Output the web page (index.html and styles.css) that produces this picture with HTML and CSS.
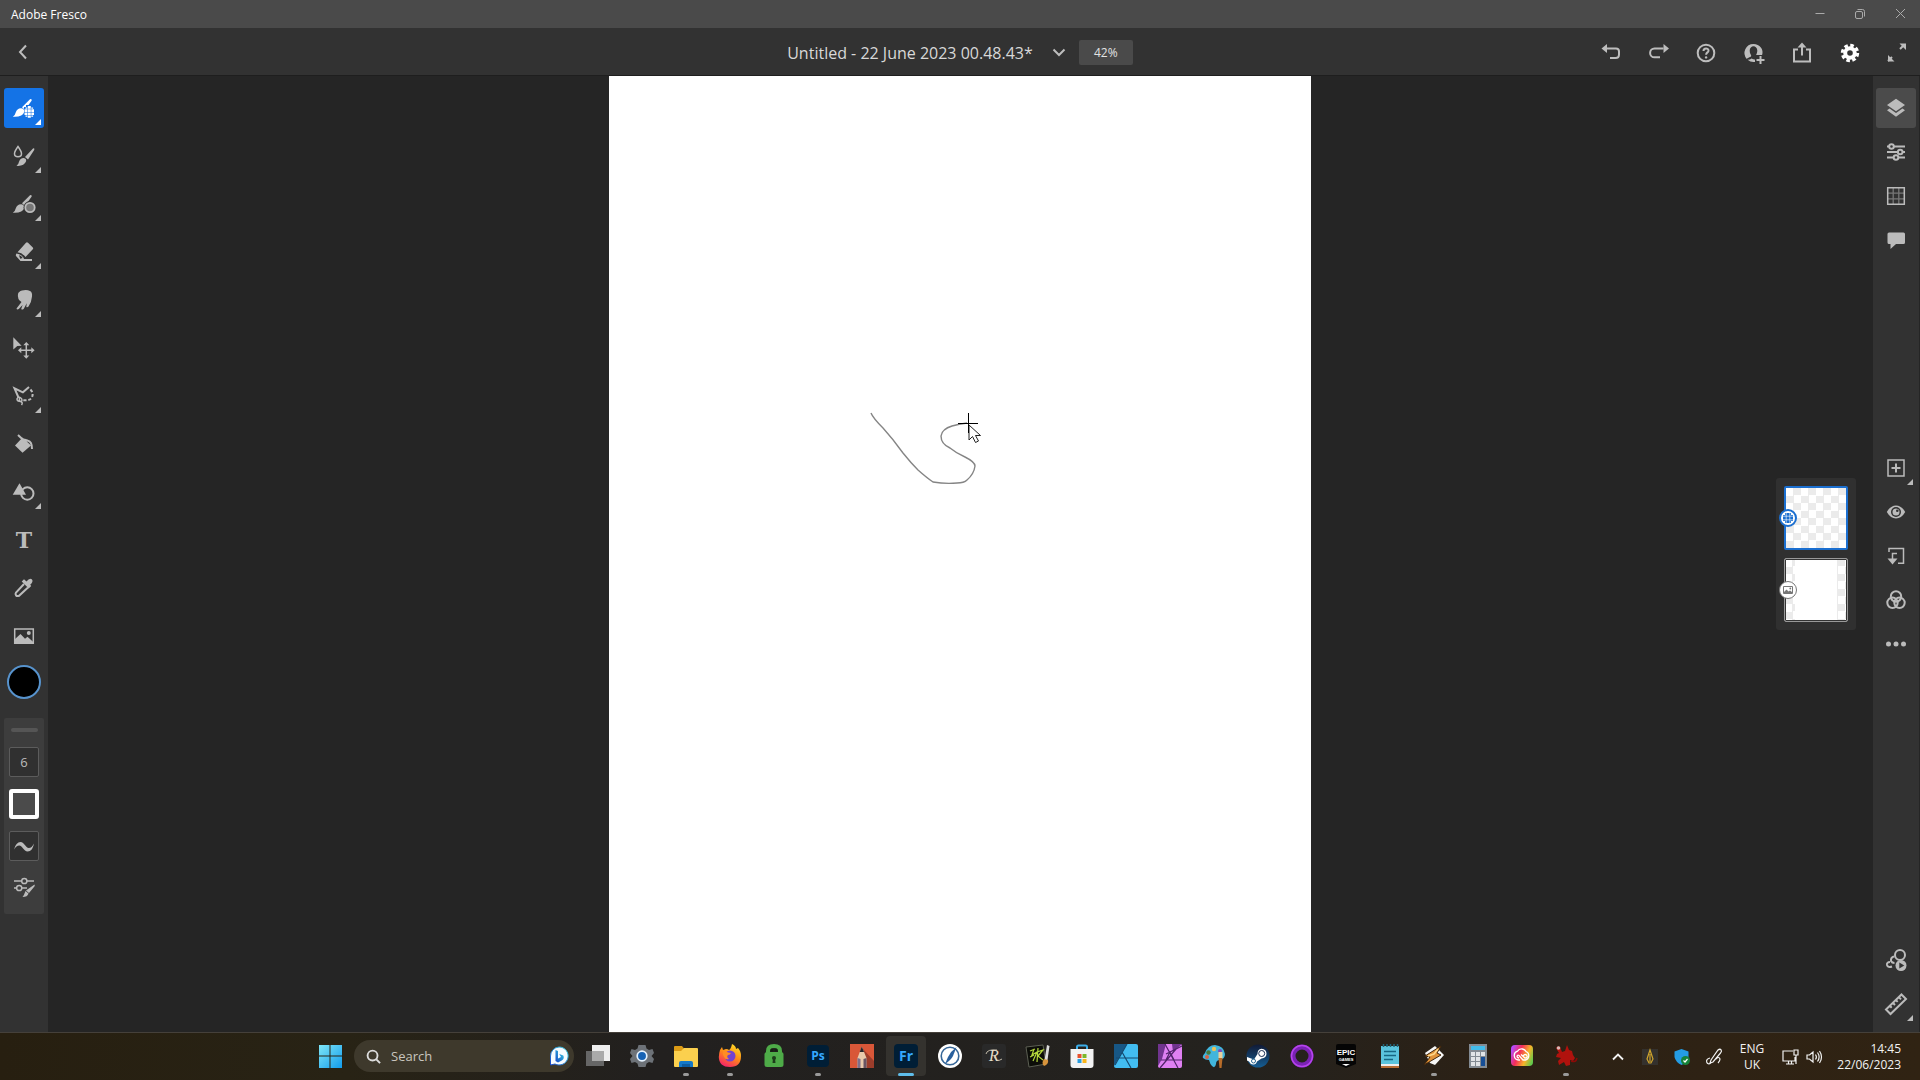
FILE: index.html
```html
<!DOCTYPE html>
<html lang="en">
<head>
  <meta charset="UTF-8">
  <meta name="viewport" content="width=device-width, initial-scale=1.0">
  <title>Adobe Fresco</title>
  <link rel="stylesheet" href="styles.css">
</head>
<body>
  <div class="titlebar">
    <span class="titlebar__name">Adobe Fresco</span>
    <div class="titlebar__controls">
      <button class="win-btn" aria-label="Minimize"><svg viewBox="0 0 12 12"><path d="M1.500 5.500h9"/></svg></button>
      <button class="win-btn" aria-label="Restore"><svg viewBox="0 0 12 12"><rect x="1.500" y="3.500" width="7" height="7" rx="1.500"/><path d="M3.500 1.500h5a2 2 0 0 1 2 2v5"/></svg></button>
      <button class="win-btn" aria-label="Close"><svg viewBox="0 0 12 12"><path d="M2 1l9 9M11 1l-9 9"/></svg></button>
    </div>
  </div>

  <header class="header">
    <div class="header__left">
      <button class="header__btn" aria-label="Back"><svg class="icon" viewBox="0 0 24 24"><path class="line" d="M14 4.500L8 11l6 6.500"/></svg></button>
    </div>
    <div class="header__doc">
      <h1 class="header__title">Untitled - 22 June 2023 00.48.43*</h1>
      <button class="header__chevron" aria-label="Document menu"><svg class="icon" viewBox="0 0 24 24"><path class="line" d="M6.500 8.500L12 14l5.500-5.500"/></svg></button>
      <button class="header__zoom">42%</button>
    </div>
    <div class="header__actions">
      <button class="header__btn" aria-label="Undo"><svg class="icon" viewBox="0 0 24 24"><path class="line" d="M10 7.500h10q3 0 3 3v3q0 3.500-3.500 3.500H14"/><path d="M5.500 7.500L11 3v9z"/></svg></button>
      <button class="header__btn" aria-label="Redo"><svg class="icon" viewBox="0 0 24 24"><path class="line" d="M19.500 7.500h-9a4.400 4.400 0 0 0 0 8.800H16"/><path d="M25 7.500L19.500 3v9z"/></svg></button>
      <button class="header__btn" aria-label="Help"><svg class="icon" viewBox="0 0 24 24"><circle class="line" cx="14" cy="12" r="8.300"/><path class="line" d="M11.500 10c0-3.300 5-3.200 5-.3 0 1.700-2.400 1.700-2.400 4"/><circle cx="14.100" cy="16.400" r="1.200"/></svg></button>
      <button class="header__btn" aria-label="Invite"><svg class="icon" viewBox="0 0 24 24"><g transform="translate(2 0)"><path d="M11.500 3a9 9 0 0 0-6.700 15c1-1.400 4.400-1.800 4.400-3.200 0-1-1.500-2-1.500-5 0-6.200 7.600-6.200 7.600 0 0 2-.8 3.200-1.200 4.200h6c2-5.600-2.400-11-8.600-11zM9.600 17.500a6 6 0 0 1-4 1.300A9 9 0 0 0 13 20.900v-2.400c-1 0-1.900-.2-3.400-1z"/><path class="line" d="M18.500 15v8M14.500 19h8"/></g></svg></button>
      <button class="header__btn" aria-label="Share"><svg class="icon" viewBox="0 0 24 24"><path class="line" d="M10 8.500H6v12h16v-12h-4M14 5v9.500"/><path d="M14 1.500L18.500 6.500h-9z"/></svg></button>
      <button class="header__btn header__btn--on" aria-label="Settings"><svg class="icon" viewBox="0 0 24 24"><circle cx="14" cy="12" r="4.800" fill="none" stroke="currentColor" stroke-width="4"/><circle cx="14" cy="12" r="7.700" fill="none" stroke="currentColor" stroke-width="3" stroke-dasharray="3.600 2.450"/></svg></button>
      <button class="header__btn" aria-label="Full screen"><svg class="icon" viewBox="0 0 24 24"><path class="line" d="M16 8l4-4M8 16l-4 4"/><path d="M15.500 2.500H22v6.500zM4 14v6.500h6.500z"/></svg></button>
    </div>
  </header>

  <main class="main">
    <nav class="tools" aria-label="Drawing tools">
      <button class="tool tool--active tool--more" aria-label="Pixel brushes"><svg class="icon" viewBox="0 0 24 24"><path d="M18 3.200q2-.9 1.700 1.400L13 14l-3-2.700zM9 12.300q3.300.4 3.300 3.500-1.500 5.600-11.500 5 2.200-1 2.900-4.200 1.200-4.200 5.300-4.300z"/><path d="M14 9h7v2h2v9h-2v2h-7v-2h-2v-9h2z" fill="#1473e6"/><path d="M15.800 10h3v2.800h-3zM12.500 13.300h2.800v2.600h-2.800zM15.800 13.300h3v2.600h-3zM19.300 13.300H22v2.600h-2.700zM12.500 16.400h2.800V19h-2.800zM15.800 16.400h3V19h-3zM19.300 16.400H22V19h-2.700zM15.800 19.500h3v2.300h-3zM13.500 11.500h1.800v1.300h-1.800zM19.300 11.500h1.800v1.300h-1.800zM13.500 19.500h1.800v1.300h-1.800zM19.300 19.500h1.800v1.300h-1.800z"/></svg></button>
      <button class="tool tool--more" aria-label="Live brushes"><svg class="icon" viewBox="0 0 24 24"><path d="M21 4.500q2-.7 1.200 1.500L16 15.500 13 13zM11.800 14q2.800.6 2.300 3.300Q12 22.500 4.500 21.800q2-1 2.500-4 1-3.500 4.800-3.800z"/><path class="line thin" d="M6 2.500Q2.500 7.500 2.500 9.700q0 3 3.500 3t3.500-3Q9.500 7.500 6 2.500z"/></svg></button>
      <button class="tool tool--more" aria-label="Vector brushes"><svg class="icon" viewBox="0 0 24 24"><path d="M18 3.200q2-.9 1.700 1.400L13 14l-3-2.700zM9 12.300q3.300.4 3.300 3.500-1.500 5.600-11.500 5 2.200-1 2.900-4.200 1.200-4.200 5.300-4.300z"/><circle cx="18" cy="15.500" r="6.500" fill="#323232"/><circle cx="18" cy="15.500" r="4.700" fill="#777" stroke="currentColor" stroke-width="1.800"/></svg></button>
      <button class="tool tool--more" aria-label="Eraser"><svg class="icon" viewBox="0 0 24 24"><path d="M14 2.700q1-.8 2 .1l4.800 4.600q.8.9 0 1.900L13.500 17q-3.500-4.500-8-4.800zM4.500 13.500q4 .2 7.500 4.700l-.5.700H20V21H8.500L4 16q-.5-1.200.5-2.500zM7 15.200l1.200 3.600 2.500-.8q-1.500-2.500-3.700-2.800z" fill-rule="evenodd"/></svg></button>
      <button class="tool tool--more" aria-label="Smudge"><svg class="icon" viewBox="0 0 24 24"><path d="M6 6Q6.500 3.500 10 2.500q5-1 8 .5 2.500 1 2 5.500-.5 6-3.500 10-1.500 1.500-2.200.2l.5-3.500-3 5.500q-1.700 1.700-2.600.2l1.400-4-3.800 4.200q-1.800 1.200-2.300-.6l5-6.500Q5 11 6 6z"/></svg></button>
      <button class="tool" aria-label="Move"><svg class="icon" viewBox="0 0 24 24"><path d="M1.300 1.300l8.300 8.500-4.300.3-4 3.400zM14.300 6l3 3.300h-6zM14.300 22.700l3-3.300h-6zM6 14.300l3.300-3v6zM22.600 14.300l-3.300-3v6z"/><path class="line thin" d="M14.300 8v13M8 14.300h13"/></svg></button>
      <button class="tool tool--more" aria-label="Lasso"><svg class="icon" viewBox="0 0 24 24"><path class="line" d="M6.500 13.500L2.500 4.300l8.400 4L17 3"/><path class="line" d="M18.500 5.500q3.500 4 1.300 8-1.800 3.500-9 2.700" stroke-dasharray="3 2"/><path class="line thin" d="M9 17.500q-4 0-4-2.500 1-3 4.500-.5 1.500 3-1.500 3-1-1.500-.5-3.500M8 17.500q3.500.5 1.500 3.500"/></svg></button>
      <button class="tool" aria-label="Fill"><svg class="icon" viewBox="0 0 24 24"><path d="M10.500 5.500l8.500 8-8.500 7.300L3 13.500z"/><path class="line" d="M6 3l8 7.500M12 7.500l4 1.200q4 .8 4 8.300"/></svg></button>
      <button class="tool tool--more" aria-label="Shapes"><svg class="icon" viewBox="0 0 24 24"><path d="M7.500 3.300l6.500 11.500H.7z"/><circle class="line" cx="15.300" cy="13.500" r="6.200"/></svg></button>
      <button class="tool tool--text" aria-label="Text">T</button>
      <button class="tool" aria-label="Eyedropper"><svg class="icon" viewBox="0 0 24 24"><path d="M14.500 5.500q3-4 5.300-2.300 2 2-1.600 5.600l1 1.200-2.500 2.500-7-7L12 3.300z"/><path class="line" d="M12 8L4 16.500q-1 1.500 0 2.800t3 .5L16 11.500"/></svg></button>
      <button class="tool" aria-label="Place image"><svg class="icon" viewBox="0 0 24 24"><path class="line thin" d="M2.700 5h18.600v14.200H2.700z"/><path d="M3 15l5.500-5 4.500 4.700 2.500-2 5.500 5V19H3z"/><circle cx="16.800" cy="9" r="2"/></svg></button>
      <button class="color-chip" aria-label="Colour"></button>

      <div class="brush-panel">
        <span class="brush-panel__handle"></span>
        <button class="brush-panel__box" aria-label="Brush size">6</button>
        <button class="brush-panel__swatch" aria-label="Flow"></button>
        <button class="brush-panel__box" aria-label="Smoothing"><svg class="icon" viewBox="0 0 24 24"><path d="M2 15.500Q4 8 8.500 8c4 0 5 6 8.300 6 2.200 0 3.500-1.500 5.200-4.500-1 5-3 8-6.300 8-4.200 0-5-6-8.500-6-2 0-3.500 1.500-5.200 4z"/></svg></button>
        <button class="brush-panel__plain" aria-label="Brush settings"><svg class="icon" viewBox="0 0 24 24"><path class="line thin" d="M2 5h7.500M15 5h7M2 12h2.500M10 12h5"/><circle class="line thin" cx="12.300" cy="5" r="2.600"/><circle class="line thin" cx="7.200" cy="12" r="2.600"/><path d="M22.500 8.500l.3 1.500-5.800 7-3-2.500zM13.500 15l3 2.500q-1 3.500-6 3.500 1.700-2 3-6z"/></svg></button>
      </div>
    </nav>

    <section class="workspace">
      <div class="page">
        <svg class="page__art" viewBox="0 0 702 956">
          <path d="M262 337Q264 342 274 352Q284 363 294 377Q302 387 309 394Q318 402 324 406Q336 408 348 407Q355 407 358 404Q365 398 366 390Q366 386 356 381Q347 377 341 372Q332 368 332 360Q333 353 343 350Q350 348 358 347" fill="none" stroke="#858585" stroke-width="1.400"/>
          <path d="M360 349v15l3.500-3.500 3 6 3-1.500-3-5.500h5z" fill="#fff" stroke="#222"/>
          <path d="M359.500 337v20M349 347.500h20" stroke="#000"/>
        </svg>
      </div>

      <div class="layers">
        <button class="layer layer--active" aria-label="Layer 2">
          <span class="layer__badge"><svg viewBox="0 0 12 12"><path d="M3 1h6v2h2v6H9v2H3V9H1V3h2z"/><path d="M4.200 0v12M7.800 0v12M0 4.200h12M0 7.800h12" stroke="#fff" stroke-width=".6"/></svg></span>
        </button>
        <button class="layer layer--base" aria-label="Layer 1">
          <span class="layer__badge"><svg viewBox="0 0 12 12"><path d="M1.500 2.500h9v7h-9z" fill="none" stroke="currentColor"/><path d="M2 8l2.500-2.500 2 2L8 6.500 10 8v1.500H2z"/><circle cx="8.300" cy="4.500" r=".9"/></svg></span>
        </button>
      </div>
    </section>

    <aside class="sidebar" aria-label="Panels">
      <div class="sidebar__group">
        <button class="tool tool--selected" aria-label="Layers"><svg class="icon" viewBox="0 0 24 24"><path d="M12 2.800l9 6.200-9 6.200L3 9zM5.500 12.500L3 14.300l9 6.500 9-6.500-2.500-1.800L12 17z"/></svg></button>
        <button class="tool" aria-label="Adjustments"><svg class="icon" viewBox="0 0 24 24"><path class="line" d="M3 6.500h2M10 6.500h11M3 12h10.500M19 12h2M3 17.500h6.500M15 17.500h6"/><circle class="line" cx="7.500" cy="6.500" r="2.300"/><circle class="line" cx="16.200" cy="12" r="2.300"/><circle class="line" cx="12" cy="17.500" r="2.300"/></svg></button>
        <button class="tool" aria-label="Grid"><svg class="icon" viewBox="0 0 24 24"><path d="M9.200 4v16M14.800 4v16M4 9.200h16M4 14.800h16" stroke="#777" stroke-width="1.300"/><path class="line thin" d="M3.700 3.700h16.600v16.600H3.700z"/></svg></button>
        <button class="tool" aria-label="Comments"><svg class="icon" viewBox="0 0 24 24"><path d="M5 4.500h14.500q1.500 0 1.500 1.500v8.500q0 1.500-1.500 1.500H12l-5.500 5v-5H5q-1.500 0-1.500-1.500V6Q3.500 4.500 5 4.500z"/></svg></button>
      </div>
      <div class="sidebar__group">
        <button class="tool tool--more" aria-label="Add layer"><svg class="icon" viewBox="0 0 24 24"><path class="line thin" d="M4 4h16v16H4z"/><path class="line" d="M12 7.500v9M7.500 12h9"/></svg></button>
        <button class="tool" aria-label="Show layer"><svg class="icon" viewBox="0 0 24 24"><path d="M12 5.500q5.500 0 9.200 6.500-3.700 6.500-9.200 6.500T2.800 12Q6.500 5.500 12 5.500z"/><circle cx="12" cy="12" r="5" fill="#323232"/><circle cx="12" cy="12" r="3.500"/><circle cx="13.300" cy="10.700" r="1.300" fill="#323232"/></svg></button>
        <button class="tool" aria-label="Clip layer"><svg class="icon" viewBox="0 0 24 24"><path class="line thin" d="M5 8V4.500h14.500v14.800H14M13 9.500H8.500V16"/><path d="M3.500 14.500h10L8.500 20.500z"/></svg></button>
        <button class="tool" aria-label="Blend mode"><svg class="icon" viewBox="0 0 24 24"><circle class="line" cx="12" cy="8.500" r="5.200"/><circle class="line" cx="8.500" cy="14.800" r="5.200"/><circle class="line" cx="15.500" cy="14.800" r="5.200"/></svg></button>
        <button class="tool" aria-label="More"><svg class="icon" viewBox="0 0 24 24"><circle cx="4.500" cy="12" r="2.500"/><circle cx="12" cy="12" r="2.500"/><circle cx="19.500" cy="12" r="2.500"/></svg></button>
      </div>
      <div class="sidebar__group sidebar__group--end">
        <button class="tool" aria-label="Motion"><svg class="icon" viewBox="0 0 24 24"><circle class="line" cx="16" cy="7" r="5"/><path class="line" d="M10.500 8.500q-4 .5-3.500 4.500 1 2 3.500 2M6 14q-3.500.2-3 3 1 3 5 1.500"/><circle cx="17" cy="17.500" r="5.500"/><path d="M15.300 14.500l5 3-5 3z" fill="#323232"/></svg></button>
        <button class="tool tool--more" aria-label="Ruler"><svg class="icon" viewBox="0 0 24 24"><path class="line" d="M17.500 2.500l4.500 4.500L6.500 22 2 17.500zM6 14l1.700 1.700M9 11l2 2M12 8.200l1.700 1.700M15 5.400l2 2"/></svg></button>
      </div>
    </aside>
  </main>

  <footer class="taskbar">
    <div class="taskbar__apps">
      <button class="app" aria-label="Start"><svg viewBox="0 0 24 24"><defs><linearGradient id="win" x1="0" y1="0" x2="1" y2="1"><stop offset="0" stop-color="#7fe6f7"/><stop offset="1" stop-color="#129cec"/></linearGradient></defs><path fill="url(#win)" d="M1 1h10.500v10.500H1zM12.500 1H24v10.500H12.500zM1 12.500h10.500V24H1zM12.500 12.500H24V24H12.500z"/></svg></button>
      <label class="search">
        <svg class="search__glass" viewBox="0 0 16 16"><circle cx="7" cy="7" r="5.300"/><path d="M11 11l4 4"/></svg>
        <input class="search__input" type="text" placeholder="Search" aria-label="Search">
        <svg class="search__bing" viewBox="0 0 20 20"><defs><linearGradient id="bing" x1="0" y1="1" x2="1" y2="0"><stop offset="0" stop-color="#1746c8"/><stop offset="1" stop-color="#35d2e0"/></linearGradient></defs><path d="M10 1a9 9 0 1 1-4 17L1.500 19V10A9 9 0 0 1 10 1z" fill="#f6fbff" stroke="url(#bing)"/><path d="M6.500 4l2.500 1v7.500l3-1.500-1.700-3 4 1.500q1.500 3-1.500 5L9 16.500 6.500 15z" fill="url(#bing)"/></svg>
      </label>
      <button class="app" aria-label="Task view"><svg viewBox="0 0 24 24"><path d="M6 1h18v16H6z" fill="#eee"/><path d="M0 7h18v15H0z" fill="#666"/><path d="M6 7h12v10H6z" fill="#aaa"/></svg></button>
      <button class="app" aria-label="Settings"><svg viewBox="0 0 24 24"><path d="M8.500 1h7l1 3.500 2.500 1.500 3.500-1 1.500 4-2.500 3 2.500 3-1.500 4-3.500-1-2.500 1.500-1 3.500h-7l-1-3.500L5 18l-3.500 1L0 15l2.500-3L0 9l1.500-4L5 6l2.500-1.500z" fill="#6d7278"/><circle cx="12" cy="12" r="4.800" fill="#1763b5" stroke="#e6f3ff" stroke-width="1.700"/></svg></button>
      <button class="app app--open" aria-label="File Explorer"><svg viewBox="0 0 24 24"><path d="M1 2h7l2 2.500L8 8H0V3q0-1 1-1z" fill="#dc9b15"/><path d="M0 7h7l3-3h13q1 0 1 1v17q0 1-1 1H1q-1 0-1-1z" fill="#fbd04e"/><path d="M5 23v-4q0-2 2-2h10q2 0 2 2v4z" fill="#1478c8"/><path d="M8 20h8v3H8z" fill="#0d5ca0"/></svg></button>
      <button class="app app--open" aria-label="Firefox"><svg viewBox="0 0 24 24"><defs><linearGradient id="fox" x1=".8" y1="0" x2=".3" y2="1"><stop offset="0" stop-color="#ffe226"/><stop offset=".5" stop-color="#ff8a16"/><stop offset="1" stop-color="#f5226b"/></linearGradient></defs><path d="M2 6l2-3 1 3 3-1q2 0 3 1 2-1 3-6 4 2 4 5l2-1q3 3 3 8 0 11-11 11T.8 13Q1 9 2 6z" fill="url(#fox)"/><circle cx="12" cy="12" r="5.500" fill="#7542cf"/><path d="M5 7q3-1 5 1.500l3 .5q-1 2-3 2-2 2 1 4-4 1-5-2-2-3-1-6z" fill="#ff8d24"/></svg></button>
      <button class="app" aria-label="VPN"><svg viewBox="0 0 24 24"><path d="M6 10V7q0-5 6-5t6 5v3" fill="none" stroke="#4eab48" stroke-width="4"/><rect x="2.500" y="8" width="19" height="15" rx="2.500" fill="#4eab48"/><circle cx="10" cy="6" r="1.500" fill="#132012"/><circle cx="14" cy="6" r="1.500" fill="#132012"/><circle cx="12" cy="14" r="2" fill="#1d3c1b"/><path d="M11 14h2l.5 5h-3z" fill="#1d3c1b"/></svg></button>
      <button class="app app--open" aria-label="Photoshop"><svg viewBox="0 0 24 24"><rect x="1" y="1" width="22" height="22" rx="4" fill="#001e36"/><text class="app__label" x="12" y="16" font-size="12">Ps</text></svg></button>
      <button class="app" aria-label="SketchBook"><svg viewBox="0 0 24 24"><path d="M0 0h24v24H0z" fill="#d95738"/><path d="M13 5l11 12v7H8z" fill="#9c3d2b"/><path d="M11.800 2.500L16.500 14v10h-9V14z" fill="#e8caac"/><path d="M11.800 2.500L14 8H9.700z" fill="#28242a"/><path d="M7.500 14l3 1v9h-3z" fill="#80708a"/><path d="M13.500 15l3-1v10h-3z" fill="#695563"/></svg></button>
      <button class="app app--active" aria-label="Fresco"><svg viewBox="0 0 24 24"><rect width="24" height="24" rx="4" fill="#001e36"/><text class="app__label" x="12" y="17" font-size="14">Fr</text></svg></button>
      <button class="app" aria-label="Quill"><svg viewBox="0 0 24 24"><circle cx="12" cy="12" r="12" fill="#fff"/><circle cx="12" cy="12" r="8.800" fill="none" stroke="#376798" stroke-width="1.600"/><path d="M18.500 3Q13 7 10 13l-3 7q6-4 8-8z" fill="#285f9d"/></svg></button>
      <button class="app" aria-label="Rebelle"><svg viewBox="0 0 24 24"><rect width="24" height="24" rx="3" fill="#292929"/><text class="app__script" x="12" y="17">R</text><path d="M4 10q1-5 11-4M12 12q2 7 8 3" fill="none" stroke="#e6ddc8" stroke-width=".8"/></svg></button>
      <button class="app" aria-label="ArtRage"><svg viewBox="0 0 24 24"><path d="M0 3l17-2 3 19-17 3z" fill="#0c0d08" stroke="#5c5f53"/><path d="M4 7l5-2M8 5l-2 6 5-3-4 9M12 4l-1 14M11 8l6-2-5 6 5 4M4 13l4-2" fill="none" stroke="#b5d83c" stroke-width="1.200"/><path d="M21 1l2.500 1-2 14h-3z" fill="#ddd"/><path d="M18 15l4 1q1 4-4 6-3-3 0-7z" fill="#d7943c"/></svg></button>
      <button class="app" aria-label="Microsoft Store"><svg viewBox="0 0 24 24"><path d="M7 6V3q0-1.500 1.500-1.500h7Q17 1.500 17 3v3" fill="none" stroke="#3caee9" stroke-width="2"/><path d="M.5 5h23v16q0 3-3 3h-17q-3 0-3-3z" fill="#f3f3f3"/><path d="M7.500 10h4v4h-4z" fill="#e8502c"/><path d="M12.500 10h4v4h-4z" fill="#7cb82a"/><path d="M7.500 15h4v4h-4z" fill="#2a9ee0"/><path d="M12.500 15h4v4h-4z" fill="#fab51a"/></svg></button>
      <button class="app" aria-label="Affinity Designer"><svg viewBox="0 0 24 24"><rect width="24" height="24" rx="2" fill="#42bdf1"/><path d="M0 0h13L0 22z" fill="#175785"/><path d="M13 0L1 21M8 8l9 16M2 14h22" fill="none" stroke="#154a70" stroke-width="1.200"/></svg></button>
      <button class="app" aria-label="Affinity Photo"><svg viewBox="0 0 24 24"><rect width="24" height="24" rx="2" fill="#df80f2"/><path d="M0 0h8L4 15l-4 7zM14 0h10L15 8z" fill="#70348e"/><path d="M7 0l13 24M24 2L8 10M18 5L2 24M3 16h21M12 8l-4 8h8z" fill="none" stroke="#51236a" stroke-width="1.200"/></svg></button>
      <button class="app" aria-label="Paint"><svg viewBox="0 0 24 24"><path d="M13 1q9 1 10 9 0 5-5 6-4 0-4 4-1 5-4 2-2-2-3-6-4 0-6-2-1-2 2-5Q6 1 13 1z" fill="#41b5dc"/><circle cx="12" cy="5" r="2.200" fill="#e8c35b"/><circle cx="6.500" cy="8.500" r="2.200" fill="#467a3f"/><circle cx="18" cy="7" r="2" fill="#7a4dbd"/><circle cx="5" cy="13" r="2" fill="#d76545"/><path d="M16.500 8h4v6h-4z" fill="#ead09d"/><path d="M16.500 14h4l-1 10h-2z" fill="#b86c29"/></svg></button>
      <button class="app" aria-label="Steam"><svg viewBox="0 0 24 24"><defs><linearGradient id="steam" x1="0" y1="0" x2="0" y2="1"><stop offset="0" stop-color="#111a35"/><stop offset="1" stop-color="#155d92"/></linearGradient></defs><circle cx="12" cy="12" r="11.500" fill="url(#steam)"/><path d="M1 13l7 2.500 3.500-5.500q0-5 4-5.300 5 .3 5 5 0 4-5 4.800l-4.500 3Q10 21 7 20.500q-3-.5-4-3l-2-1z" fill="#fff"/><circle cx="15.700" cy="9.500" r="3" fill="#fff" stroke="#172c50"/><circle cx="7.500" cy="17" r="2" fill="none" stroke="#2b6993"/></svg></button>
      <button class="app" aria-label="Ring"><svg viewBox="0 0 24 24"><circle cx="12" cy="12" r="9" fill="none" stroke="#7a22b4" stroke-width="5"/><circle cx="12" cy="12" r="10.500" fill="none" stroke="#b744ed" stroke-width="1.500"/></svg></button>
      <button class="app" aria-label="Epic Games"><svg viewBox="0 0 24 24"><path d="M4 0h16q2 0 2 2v18l-10 4-10-4V2q0-2 2-2z" fill="#050505"/><text class="app__epic" x="12" y="11" font-size="8">EPIC</text><text class="app__epic" x="12" y="17" font-size="4">GAMES</text><path d="M8 20h8l-4 2z" fill="#fff"/></svg></button>
      <button class="app" aria-label="Notepad"><svg viewBox="0 0 24 24"><path d="M3 2h18v20H3z" fill="#5bc4dd"/><path d="M3 20h18v2H3z" fill="#eee"/><path d="M3 22h18v2H3z" fill="#b76e35"/><path d="M5.500 0v3M9 0v3M12.500 0v3M16 0v3M19.500 0v3" stroke="#226578" stroke-width="1.500"/><path d="M6 7.500h12M6 11.500h12M6 15.500h9" stroke="#176783" stroke-width="1.500"/></svg></button>
      <button class="app app--open" aria-label="Winamp"><svg viewBox="0 0 24 24"><path d="M3 9l10-7 9 9-9 10-5-2z" fill="#f6f6f6"/><path d="M19 2l-4 7 4 2L2 21l6-8-5-1z" fill="#e09239" stroke="#41270d"/><path d="M16 5l-4 5-6 2" fill="none" stroke="#ffd98c" stroke-width="1.500"/></svg></button>
      <button class="app" aria-label="Calculator"><svg viewBox="0 0 24 24"><path d="M3 0h18v24H3z" fill="#838b93"/><path d="M5 2h14v4H5z" fill="#42bceb"/><path d="M5 8h4v4H5zM10 8h4v4h-4zM15 8h4v4h-4zM5 13h4v4H5zM10 13h4v4h-4zM5 18h4v4H5zM10 18h4v4h-4z" fill="#e1e4e7"/><path d="M15 13h4v9h-4z" fill="#164e96"/></svg></button>
      <button class="app" aria-label="Creative Cloud"><svg viewBox="0 0 24 24"><defs><linearGradient id="cc" x1="0" y1=".3" x2="1" y2=".7"><stop offset="0" stop-color="#b64aff"/><stop offset=".35" stop-color="#f42d59"/><stop offset=".7" stop-color="#f7b429"/><stop offset="1" stop-color="#62c94b"/></linearGradient></defs><rect x="1" y="1" width="22" height="21" rx="4" fill="url(#cc)"/><path d="M10 16H8.500a4.500 4.500 0 0 1-1-8.800Q9 4.500 12.500 5q2.500.5 3.500 2.500a4.500 4.500 0 0 1-.5 8.500H13L9 11.500q-1.500-1-2 1 .3 1.500 2 1.500M11 10.500l4 3.500q2 .2 2.200-1.500-.2-2-2-2-1 0-2.200 1.500" fill="none" stroke="#fff" stroke-width="1.300"/></svg></button>
      <button class="app app--open" aria-label="IrfanView"><svg viewBox="0 0 24 24"><path d="M2 4q2-3 4-1l2 5 3-1 2-6 2 5 3 1 1 4 2 3-2 3-3-1v5l-4 1-2-4-5 3-1-4 3-3-5-1 1-3 2-1z" fill="#b0120d"/><path d="M17 17q5 2 6-3" fill="none" stroke="#8c0907" stroke-width="1.500"/><circle cx="4.500" cy="4" r="1.800" fill="#d8b9b6"/></svg></button>
    </div>

    <div class="tray">
      <button class="tray__btn" aria-label="Hidden icons"><svg viewBox="0 0 16 16"><path d="M3 10.500l5-5 5 5" stroke-width="1.800"/></svg></button>
      <button class="tray__btn" aria-label="Pen driver"><svg viewBox="0 0 16 16"><path d="M0 0h16v16H0z" fill="#34312d" stroke="none"/><path d="M8 1l3 9-2 4H7l-2-4zM8 5v8" stroke="#d0a52c"/></svg></button>
      <button class="tray__btn" aria-label="Security"><svg viewBox="0 0 16 16"><path d="M7.500 0l7 2.500V8q-1 5-7 8-6-3-7-8V2.500z" fill="#249ce4" stroke="none"/><circle cx="11.500" cy="11.500" r="4.500" fill="#16833a" stroke="none"/><path d="M9.500 11.500l1.500 1.500 2.500-3" stroke="#fff"/></svg></button>
      <button class="tray__btn" aria-label="Pen menu"><svg viewBox="0 0 16 16"><path d="M5 11l7-10q2-1.500 3.200 0 .8 1.500-.7 3L7 13l-3 1zM4 9q-4 1-3.300 4 1 3 4.300 1M10 10q3-3 4 0 0 2-2 4"/></svg></button>
      <button class="tray__lang"><span>ENG</span><span>UK</span></button>
      <button class="tray__net" aria-label="Network and sound">
        <svg viewBox="0 0 16 16"><path d="M11 2H1v10h12V8M4 15h8M6.500 12v3M9.500 12v3M12 1h4v5h-4zM14 6v9"/></svg>
        <svg viewBox="0 0 16 16"><path d="M1 6h2.500L7 3v10l-3.500-3H1zM9.500 5.500q1.800 2.500 0 5M11.500 3.500q3.200 4.500 0 9M13.500 2q4 6 0 12"/></svg>
      </button>
      <button class="tray__clock"><span>14:45</span><span>22/06/2023</span></button>
    </div>
  </footer>
</body>
</html>
```
FILE: styles.css
```css
* {
  box-sizing: border-box;
}

body {
  margin: 0;
  height: 100vh;
  display: flex;
  flex-direction: column;
  overflow: hidden;
  background: #252525;
  color: #e3e3e3;
  font-family: "Open Sans", "Noto Sans", sans-serif;
  font-size: 12px;
}

button {
  margin: 0;
  padding: 0;
  border: none;
  background: none;
  color: inherit;
  font: inherit;
  cursor: pointer;
  display: flex;
  align-items: center;
  justify-content: center;
}

svg {
  display: block;
  flex: none;
  overflow: visible;
}

.icon {
  width: 24px;
  height: 24px;
  fill: currentColor;
}

.line {
  fill: none;
  stroke: currentColor;
  stroke-width: 2;
}

.thin {
  stroke-width: 1.5;
}

/* window title bar */
.titlebar {
  flex: none;
  height: 28px;
  padding-left: 11px;
  display: flex;
  align-items: center;
  justify-content: space-between;
  background: #4a4a4a;
}

.titlebar__name {
  color: #fff;
}

.titlebar__controls {
  display: flex;
}

.win-btn {
  width: 40px;
  height: 28px;
}

.win-btn svg {
  width: 12px;
  height: 12px;
  fill: none;
  stroke: #aaa;
}

/* document header */
.header {
  flex: none;
  height: 48px;
  padding-top: 2px;
  display: grid;
  grid-template-columns: 1fr auto 1fr;
  align-items: center;
  background: #323232;
  border-bottom: 1px solid #1e1e1e;
  color: #bdbdbd;
}

.header__left,
.header__doc,
.header__actions {
  display: flex;
  align-items: center;
}

.header__actions {
  justify-content: flex-end;
}

.header__btn {
  width: 48px;
  height: 45px;
}

.header__btn--on {
  color: #fff;
}

.header__title {
  margin: 0;
  font-size: 16px;
  font-weight: 400;
  color: #d8d8d8;
  white-space: nowrap;
}

.header__chevron {
  width: 24px;
  height: 24px;
  margin: 0 8px 0 14px;
}

.header__zoom {
  width: 54px;
  height: 25px;
  border-radius: 2px;
  background: #4a4a4a;
  color: #e3e3e3;
}

/* main area */
.main {
  flex: 1;
  min-height: 0;
  display: flex;
}

.tools {
  flex: none;
  width: 48px;
  padding-top: 12px;
  display: flex;
  flex-direction: column;
  align-items: center;
  gap: 8px;
  background: #323232;
}

.tool {
  position: relative;
  flex: none;
  width: 40px;
  height: 40px;
  border-radius: 3px;
  color: #bbb;
}

.tool--active {
  background: #1473e6;
  color: #fff;
}

.tool--selected {
  background: #4b4b4b;
}

.tool--more::after {
  content: "";
  position: absolute;
  right: 3px;
  bottom: 3px;
  border-left: 6px solid transparent;
  border-bottom: 6px solid currentColor;
}

.tool--text {
  font-family: "DejaVu Serif", serif;
  font-size: 22px;
  font-weight: 700;
}

.color-chip {
  flex: none;
  width: 34px;
  height: 34px;
  margin: 1px 0;
  border: 2px solid #5793cd;
  border-radius: 50%;
  background: #000;
}

.brush-panel {
  width: 40px;
  height: 196px;
  margin-top: 10px;
  padding-top: 10px;
  display: flex;
  flex-direction: column;
  align-items: center;
  gap: 12px;
  background: #3d3d3d;
  border-radius: 2px;
}

.brush-panel__handle {
  width: 27px;
  height: 4px;
  margin-bottom: 3px;
  border-radius: 2px;
  background: #555;
}

.brush-panel__box,
.brush-panel__swatch,
.brush-panel__plain {
  flex: none;
  width: 30px;
  height: 30px;
  color: #bbb;
}

.brush-panel__box {
  border: 1px solid #5c5c5c;
  border-radius: 2px;
  background: #303030;
  font-size: 13px;
}

.brush-panel__swatch {
  border: 4px solid #fff;
  border-radius: 3px;
  background: #4b4b4b;
}

.workspace {
  position: relative;
  flex: 1;
  min-width: 0;
  padding-right: 2px;
  display: flex;
  justify-content: center;
  background: #252525;
}

.page {
  height: 100%;
  aspect-ratio: 702 / 956;
  background: #fff;
}

.page__art {
  width: 100%;
  height: 100%;
}

/* layer thumbnails float over the canvas */
.layers {
  position: absolute;
  right: 17px;
  top: 50%;
  transform: translateY(-50%);
  padding: 8px;
  display: flex;
  flex-direction: column;
  gap: 8px;
  border-radius: 3px;
  background: #303030;
}

.layer {
  position: relative;
  width: 64px;
  height: 64px;
  border-radius: 2px;
  background: repeating-conic-gradient(#ebebeb 0 25%, #fff 0 50%) 0 0 / 15px 15px;
}

.layer--active {
  border: 2px solid #1b6fd0;
  color: #1b6fd0;
}

.layer--base {
  border: 1px solid #999;
  background: linear-gradient(#fff, #fff) center / 42px 100% no-repeat,
    repeating-conic-gradient(#ebebeb 0 25%, #fff 0 50%) 0 0 / 15px 15px;
  box-shadow: inset 0 0 0 1px #333;
  color: #777;
}

.layer__badge {
  position: absolute;
  left: -6px;
  top: 50%;
  transform: translateY(-50%);
  width: 18px;
  height: 18px;
  display: flex;
  align-items: center;
  justify-content: center;
  border: 1px solid currentColor;
  border-radius: 50%;
  background: #fff;
}

.layer--active .layer__badge {
  left: -7px;
  border-width: 2px;
}

.layer__badge svg {
  width: 12px;
  height: 12px;
  fill: currentColor;
}

.sidebar {
  flex: none;
  width: 47px;
  padding: 12px 0 8px;
  display: grid;
  grid-template-rows: 1fr auto 1fr;
  justify-content: center;
  background: #323232;
  border-right: 1px solid #252525;
}

.sidebar__group {
  display: flex;
  flex-direction: column;
  gap: 4px;
}

.sidebar__group--end {
  justify-content: flex-end;
}

/* taskbar */
.taskbar {
  flex: none;
  height: 48px;
  display: grid;
  grid-template-columns: 1fr auto 1fr;
  align-items: center;
  border-top: 1px solid #45403a;
  background: linear-gradient(90deg, #271f10, #282315 18%, #22201f 34%, #24221e 65%, #2c2115 78%, #302313);
  color: #f2f2f2;
}

.taskbar__apps {
  grid-column: 2;
  margin-right: 16px;
  padding-bottom: 1px;
  display: flex;
  align-items: center;
  gap: 4px;
}

.app {
  position: relative;
  width: 40px;
  height: 40px;
  border-radius: 4px;
}

.app svg {
  width: 24px;
  height: 24px;
}

.app--active {
  background: #34322e;
}

.app--open::after,
.app--active::after {
  content: "";
  position: absolute;
  bottom: 0;
  left: 50%;
  transform: translateX(-50%);
  width: 6px;
  height: 3px;
  border-radius: 2px;
  background: #9a9a9a;
}

.app--active::after {
  width: 16px;
  background: #5fbdea;
}

.app__label {
  fill: #35a9ff;
  font-family: "Open Sans", sans-serif;
  font-weight: 700;
  text-anchor: middle;
}

.app__script {
  fill: #e6ddc8;
  font-family: "Liberation Serif", serif;
  font-size: 16px;
  font-style: italic;
  text-anchor: middle;
}

.app__epic {
  fill: #fff;
  font-family: "Liberation Sans", sans-serif;
  font-weight: 700;
  text-anchor: middle;
}

.search {
  width: 220px;
  height: 32px;
  padding: 0 5px 0 12px;
  display: flex;
  align-items: center;
  gap: 10px;
  border-radius: 16px;
  background: #3e392c;
}

.search__glass {
  width: 15px;
  height: 15px;
  fill: none;
  stroke: #ddd;
  stroke-width: 2;
}

.search__input {
  flex: 1;
  min-width: 0;
  padding: 0;
  border: none;
  outline: none;
  background: none;
  color: #ddd;
  font: inherit;
  font-size: 13px;
}

.search__input::placeholder {
  color: #c9c6bf;
}

.search__bing {
  width: 20px;
  height: 20px;
}

.tray {
  grid-column: 3;
  padding-right: 19px;
  display: flex;
  align-items: center;
  justify-content: flex-end;
}

.tray svg {
  width: 16px;
  height: 16px;
  fill: none;
  stroke: #f2f2f2;
  stroke-width: 1.2;
}

.tray__btn {
  width: 32px;
  height: 40px;
}

.tray__lang {
  width: 44px;
  flex-direction: column;
  line-height: 16px;
}

.tray__net {
  gap: 8px;
  padding: 0 8px;
}

.tray__clock {
  width: 71px;
  flex-direction: column;
  align-items: flex-end;
  line-height: 16px;
}
```
